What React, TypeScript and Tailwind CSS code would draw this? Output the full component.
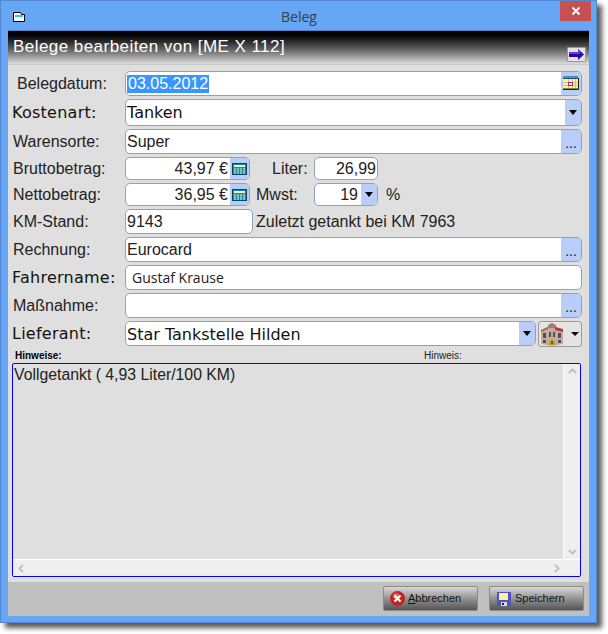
import type { ReactNode } from "react";

const field = "flex bg-white border border-[#8ba3bf] rounded-[5px] overflow-hidden";
const side = "flex items-center justify-center bg-[#b9cdf9] shrink-0";

function CalendarIcon() {
  return (
    <svg width="16" height="15" viewBox="0 0 16 15">
      <rect x="0" y="2" width="15" height="11" fill="#f6f2b4" />
      <rect x="0" y="0" width="15" height="2" fill="#3f9a9a" />
      <path d="M0 2.500h15" stroke="#2a4a8a" />
      <path d="M5.500 3v10M9.500 3v10M12.500 3v10M0 6.500h15M0 9.500h15" stroke="#d2c470" />
      <rect x="5.500" y="6.500" width="4" height="3" fill="#fff" stroke="#cc1f7c" />
      <path d="M0 13.500h15.500V2" fill="none" stroke="#20200a" />
      <path d="M0 12.500h15" stroke="#8a8a30" />
    </svg>
  );
}

function CalcIcon() {
  return (
    <svg width="15" height="12" viewBox="0 0 15 12">
      <rect x="0.500" y="0.500" width="14" height="11" fill="#12909c" stroke="#104060" />
      <rect x="2" y="2" width="11" height="2" fill="#f2f4c8" />
      <path d="M2 6h11M2 8h11M2 10h11" stroke="#e6eef0" strokeDasharray="2 1" />
    </svg>
  );
}

function Caret() {
  return <div className="w-0 h-0 border-x-[4px] border-x-transparent border-t-[5px] border-t-black" />;
}

function Dots() {
  return <span className="text-[14px] leading-none text-[#222] mt-[3px]">...</span>;
}

function Row({ label, big, indent, h, mt, children }: { label: string; big?: boolean; indent?: boolean; h: number; mt: string; children: ReactNode }) {
  return (
    <div className={`flex items-center ${mt}`} style={{ height: h }}>
      <div
        className={`w-[116px] shrink-0 ${indent ? "pl-[8px]" : big ? "pl-[3px]" : "pl-[4px]"} ${
          big ? "font-['DejaVu_Sans',sans-serif] text-[16px] tracking-[0.25px] text-[#111]" : "text-[16px] text-[#222]"
        }`}
      >
        {label}
      </div>
      {children}
    </div>
  );
}

export default function App() {
  return (
    <div className="w-[608px] h-[634px] bg-white font-['Liberation_Sans',sans-serif] overflow-hidden">
      <div className="w-[597px] h-[623px] flex flex-col bg-[#66a6f5] border border-[#5288d2] shadow-[5px_5px_5px_rgba(0,0,0,0.65)]">
        {/* title bar */}
        <div className="h-[29px] shrink-0 flex items-start relative">
          <svg className="ml-[11px] mt-[10px]" width="14" height="12" viewBox="0 0 14 12">
            <path d="M1.500 1.500h7l1 2h3v7h-11z" fill="#fff" stroke="#000" />
            <path d="M3 4h8v2H3z" fill="#35c8c8" />
          </svg>
          <div className="flex-1 text-center pt-[7px] pr-[24px] text-[14px] leading-[18px] text-[#33424f] font-['Open_Sans',sans-serif]">
            Beleg
          </div>
          <div className="absolute right-[5px] top-0 w-[31px] h-[20px] bg-[#c75050] flex items-center justify-center">
            <svg width="10" height="10" viewBox="0 0 10 10">
              <path d="M1.500 1.500l7 7M8.500 1.500l-7 7" stroke="#fff" strokeWidth="2" />
            </svg>
          </div>
        </div>

        {/* client area */}
        <div className="flex-1 mx-[7px] mb-[6px] flex flex-col bg-[#dfdfdf] min-h-0 border-t border-[#4f86cf]">
          <div className="h-[33px] shrink-0 flex bg-gradient-to-b from-black to-[#dcdcdc] relative">
            <div className="pl-[5px] pt-[6px] text-[17px] leading-[20px] text-white tracking-[0.45px]">
              Belege bearbeiten von [ME X 112]
            </div>
            <div className="absolute right-[3px] bottom-[2px] w-[19px] h-[15px] bg-[#e4e4e4] border border-[#999] rounded-[1px] flex items-center justify-center">
              <svg width="15" height="11" viewBox="0 0 15 11">
                <path d="M0 3h9V0l6 5.500L9 11V8H0z" fill="#3000a8" />
                <path d="M0 3h9V0l2 2v3H0z" fill="#5a40e0" />
              </svg>
            </div>
          </div>
          <div className="h-px bg-[#c8c8c8]" />

          {/* form */}
          <div className="flex-1 flex flex-col min-h-0 pl-[1px] pr-[7px]">
            <Row label="Belegdatum:" indent h={25} mt="mt-[6px]">
              <div className={`flex-1 h-full ${field}`}>
                <div className="flex-1 flex items-center pl-[1px] text-[16px]">
                  <span className="bg-[#3a96ff] text-white leading-[18px] px-[1px]">03.05.2012</span>
                </div>
                <div className={`${side} w-[20px]`}><CalendarIcon /></div>
              </div>
            </Row>
            <Row label="Kostenart:" big h={27} mt="mt-[3px]">
              <div className={`flex-1 h-full ${field}`}>
                <div className="flex-1 flex items-center pl-[1px] text-[16px] font-['DejaVu_Sans',sans-serif] text-[#111]">Tanken</div>
                <div className={`${side} w-[16px]`}><Caret /></div>
              </div>
            </Row>
            <Row label="Warensorte:" h={25} mt="mt-[3px]">
              <div className={`flex-1 h-full ${field}`}>
                <div className="flex-1 flex items-center pl-[1px] text-[16px] text-[#222]">Super</div>
                <div className={`${side} w-[20px]`}><Dots /></div>
              </div>
            </Row>
            <Row label="Bruttobetrag:" h={23} mt="mt-[3px]">
              <div className={`w-[125px] h-full ${field}`}>
                <div className="flex-1 flex items-center justify-end pr-[2px] text-[16px] text-[#222]">43,97 €</div>
                <div className={`${side} w-[19px]`}><CalcIcon /></div>
              </div>
              <div className="w-[64px] pl-[22px] text-[16px] text-[#222]">Liter:</div>
              <div className={`w-[64px] h-full ${field}`}>
                <div className="flex-1 flex items-center justify-end pr-[1px] text-[16px] text-[#222]">26,99</div>
              </div>
            </Row>
            <Row label="Nettobetrag:" h={23} mt="mt-[3px]">
              <div className={`w-[125px] h-full ${field}`}>
                <div className="flex-1 flex items-center justify-end pr-[2px] text-[16px] text-[#222]">36,95 €</div>
                <div className={`${side} w-[19px]`}><CalcIcon /></div>
              </div>
              <div className="w-[64px] pl-[6px] text-[16px] text-[#222]">Mwst:</div>
              <div className={`w-[64px] h-full ${field}`}>
                <div className="flex-1 flex items-center justify-end pr-[3px] text-[16px] text-[#222]">19</div>
                <div className={`${side} w-[16px]`}><Caret /></div>
              </div>
              <div className="pl-[8px] text-[16px] text-[#222]">%</div>
            </Row>
            <Row label="KM-Stand:" h={25} mt="mt-[3px]">
              <div className={`w-[128px] h-full ${field}`}>
                <div className="flex-1 flex items-center pl-[1px] text-[16px] text-[#222]">9143</div>
              </div>
              <div className="pl-[3px] text-[16px] text-[#222]">Zuletzt getankt bei KM 7963</div>
            </Row>
            <Row label="Rechnung:" h={25} mt="mt-[3px]">
              <div className={`flex-1 h-full ${field}`}>
                <div className="flex-1 flex items-center pl-[1px] text-[16px] text-[#222]">Eurocard</div>
                <div className={`${side} w-[20px]`}><Dots /></div>
              </div>
            </Row>
            <Row label="Fahrername:" big h={25} mt="mt-[3px]">
              <div className={`flex-1 h-full ${field}`}>
                <div className="flex-1 flex items-center pl-[6px] text-[14px] text-[#222] font-['Open_Sans',sans-serif]">Gustaf Krause</div>
              </div>
            </Row>
            <Row label="Maßnahme:" h={25} mt="mt-[3px]">
              <div className={`flex-1 h-full ${field}`}>
                <div className="flex-1" />
                <div className={`${side} w-[20px]`}><Dots /></div>
              </div>
            </Row>
            <Row label="Lieferant:" big h={25} mt="mt-[3px]">
              <div className={`w-[411px] h-full ${field}`}>
                <div className="flex-1 flex items-center pl-[1px] pt-[2px] text-[16px] font-['DejaVu_Sans',sans-serif] text-[#111]">Star Tankstelle Hilden</div>
                <div className={`${side} w-[16px]`}><Caret /></div>
              </div>
              <div className="ml-[2px] flex-1 h-[26px] self-start border border-[#999] rounded-[3px] bg-[#e4e4e4] flex items-center justify-between pl-[1px] pr-[2px]">
                <svg width="24" height="24" viewBox="0 0 24 24" className="shrink-0">
                  <path d="M1 8l11-5 11 5v14l-11 2-11-2z" fill="#c9a999" />
                  <path d="M8 3l4-2 4 2v3h-8z" fill="#a87868" />
                  <path d="M15 5l8 2v3l-8-2z" fill="#c83040" />
                  <path d="M1 8l7-3v2l-7 3z" fill="#8a7264" />
                  <path d="M3 11h3v5H3zM9 10h2v5H9zM13 10h2v5h-2zM18 11h3v5h-3zM3 18h3v3H3zM18 18h3v3h-3z" fill="#4a5256" />
                  <path d="M12 16l4 7H8z" fill="#b8a020" />
                  <path d="M12 19v3" stroke="#222" />
                </svg>
                <div className="w-0 h-0 border-x-[4px] border-x-transparent border-t-[4px] border-t-black" />
              </div>
            </Row>

            <div className="h-[17px] shrink-0 flex items-center text-[10px] leading-[12px] text-black pt-[3px]">
              <span className="w-[415px] pl-[6px] font-bold">Hinweise:</span>
              <span className="text-[#222]">Hinweis:</span>
            </div>

            <div className="ml-[3px] mr-[1px] h-[214px] shrink-0 border border-[#0000ff] rounded-[2px] bg-[#dfdfdf] flex flex-col overflow-hidden">
              <div className="flex-1 flex min-h-0">
                <div className="flex-1 pl-[1px] pt-[1px] text-[15.800px] leading-[20px] text-[#222]">Vollgetankt ( 4,93 Liter/100 KM)</div>
                <div className="w-[17px] border-l border-white bg-[#efefef] flex flex-col items-center justify-between py-[4px]">
                  <svg width="9" height="6" viewBox="0 0 9 6"><path d="M1 5l3.500-3.500L8 5" fill="none" stroke="#c2c2c2" strokeWidth="2" /></svg>
                  <svg width="9" height="6" viewBox="0 0 9 6"><path d="M1 1l3.500 3.500L8 1" fill="none" stroke="#c2c2c2" strokeWidth="2" /></svg>
                </div>
              </div>
              <div className="h-[17px] shrink-0 border-t border-white bg-[#efefef] flex items-center justify-between pl-[5px] pr-[20px]">
                <svg width="6" height="9" viewBox="0 0 6 9"><path d="M5 1L1.500 4.500 5 8" fill="none" stroke="#c2c2c2" strokeWidth="2" /></svg>
                <svg width="6" height="9" viewBox="0 0 6 9"><path d="M1 1l3.500 3.500L1 8" fill="none" stroke="#c2c2c2" strokeWidth="2" /></svg>
              </div>
            </div>
          </div>

          {/* footer */}
          <div className="h-[34px] shrink-0 bg-[#c0c0c0] flex items-start justify-end gap-[11px] pt-[4px] pr-[5px]">
            <div className="w-[95px] h-[25px] rounded-[2px] border border-[#8a8a8a] bg-gradient-to-b from-[#d8d8d8] to-[#555] flex items-center pl-[6px] gap-[3px] text-[11px] text-[#111]">
              <svg width="15" height="15" viewBox="0 0 15 15">
                <circle cx="7.500" cy="7.500" r="7.500" fill="#cc1f1f" />
                <circle cx="6" cy="5" r="3" fill="#e86a5a" />
                <path d="M4.500 4.500l6 6M10.500 4.500l-6 6" stroke="#fff" strokeWidth="2.200" />
              </svg>
              <span><span className="underline">A</span>bbrechen</span>
            </div>
            <div className="w-[95px] h-[25px] rounded-[2px] border border-[#8a8a8a] bg-gradient-to-b from-[#d8d8d8] to-[#555] flex items-center pl-[7px] gap-[4px] text-[11px] text-[#111]">
              <svg width="14" height="14" viewBox="0 0 14 14">
                <path d="M0 0h14v14H0z" fill="#5252b8" />
                <path d="M2 1h9v7H2z" fill="#f8f0a8" />
                <path d="M4 10h6v4H4z" fill="#d8d8e0" />
                <path d="M5 11h2v2H5z" fill="#222" />
              </svg>
              <span>Speichern</span>
            </div>
          </div>
        </div>
      </div>
    </div>
  );
}
